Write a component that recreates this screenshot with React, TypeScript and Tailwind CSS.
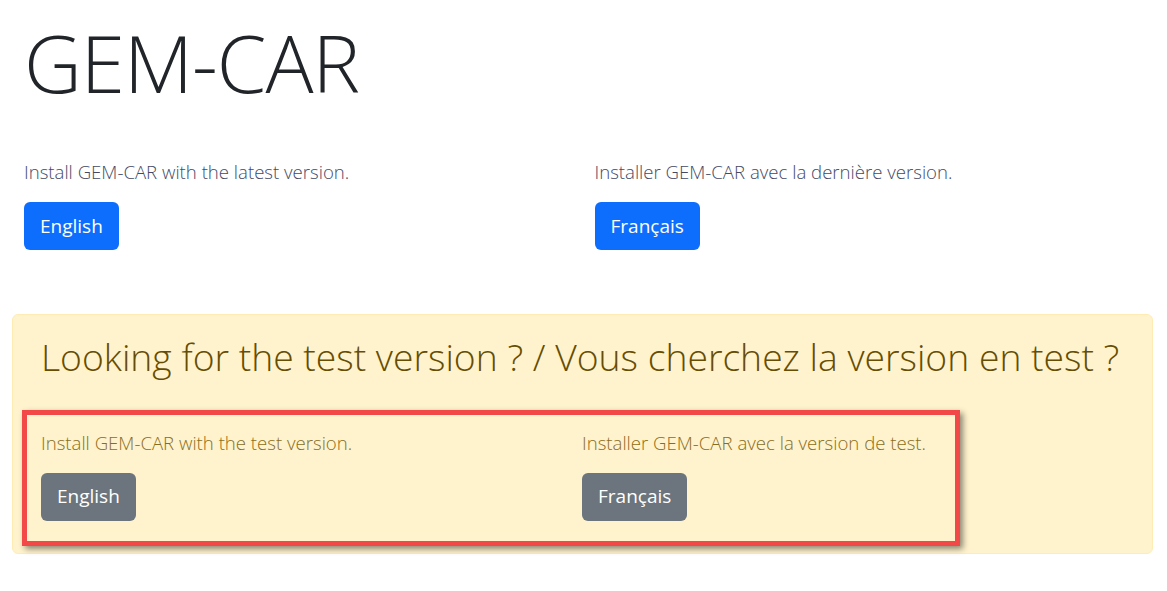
import React from 'react';

const font = { fontFamily: '"Open Sans", "Noto Sans", sans-serif' };

const Col: React.FC<{ text: string; label: string; variant: 'primary' | 'secondary' }> = ({ text, label, variant }) => (
  <div className="flex-1 px-3">
    <p className={`text-[18.6px] font-light leading-[1.5] whitespace-nowrap ${variant === 'primary' ? 'text-[#444a66]' : 'text-[#8a6d1c]'}`}>{text}</p>
    <button
      className={`mt-4 h-12 px-4 rounded-md text-[19px] text-white font-normal ${
        variant === 'primary' ? 'bg-[#0d6efd]' : 'bg-[#6c757d]'
      }`}
    >
      {label}
    </button>
  </div>
);

export default function App() {
  return (
    <div className="w-[1167px] h-[591px] bg-white overflow-hidden" style={font}>
      <div className="px-3">
        <h1 className="pl-3 pt-[14px] text-[80px] font-light leading-[1.2] text-[#212529] tracking-[-1px]">GEM-CAR</h1>

        <div className="flex mt-[48px] w-[1141px]">
          <Col text="Install GEM-CAR with the latest version." label="English" variant="primary" />
          <Col text="Installer GEM-CAR avec la dernière version." label="Français" variant="primary" />
        </div>

        <div className="relative mt-[64px] w-[1141px] h-[240px] bg-[#fff3cd] border border-[#ffecb5] rounded-md px-4 pt-[20px]">
          <h2 className="pl-3 text-[37.3px] font-light leading-[1.2] text-[#664d03] whitespace-nowrap">
            Looking for the test version ? / Vous cherchez la version en test ?
          </h2>
          <div className="flex mt-[49px] w-[1082px]">
            <Col text="Install GEM-CAR with the test version." label="English" variant="secondary" />
            <Col text="Installer GEM-CAR avec la version de test." label="Français" variant="secondary" />
          </div>
          <div className="absolute left-[9px] top-[95px] w-[938px] h-[136px] border-[5px] border-[#f24848] shadow-[3px_3px_6px_rgba(0,0,0,0.45)]" />
        </div>
      </div>
    </div>
  );
}
